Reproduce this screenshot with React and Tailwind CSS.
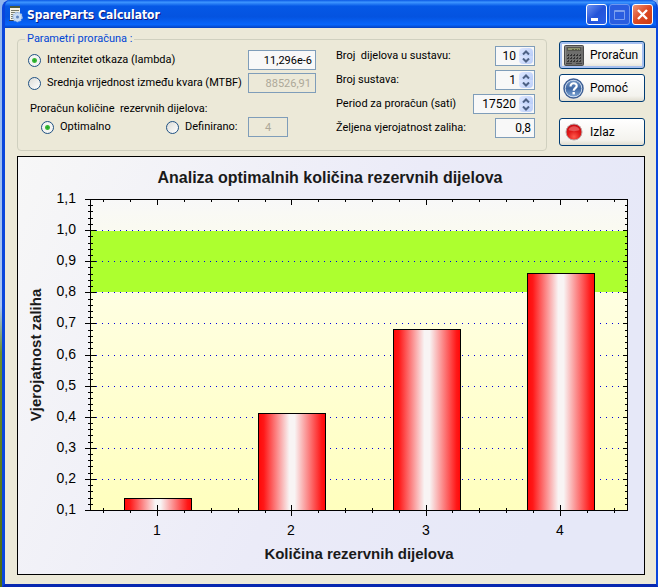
import React from "react";

const VALUES = [
  { label: "1", value: 0.138 },
  { label: "2", value: 0.411 },
  { label: "3", value: 0.681 },
  { label: "4", value: 0.861 },
];

const PLOT = { left: 73, right: 610, top: 43, bottom: 354 };
const STEP_X = (PLOT.right - PLOT.left) / 4;
const yOf = (v) => Math.round(PLOT.bottom - ((v - 0.1) * (PLOT.bottom - PLOT.top)));

function AppIcon() {
  return (
    <svg width="14" height="17" viewBox="0 0 14 17" aria-hidden="true">
      <path d="M1 0h10v14H1z" fill="#f4f2e6" />
      <path d="M1 0h10v2H1z" fill="#4d5a3c" />
      <path d="M2 4.500h8M2 6.500h7M2 8.500h4M2 10.500h3M2 12.500h3" stroke="#77796a" />
      <path d="M0 14.500h8" stroke="#3a4250" />
      <circle cx="8.500" cy="11" r="4.500" fill="#c9dcf3" stroke="#a9c4e8" strokeWidth="1.500" strokeDasharray="2 1" />
      <circle cx="8.500" cy="11" r="1.500" fill="#5f83bd" />
    </svg>
  );
}

function CalculatorIcon() {
  return (
    <svg width="20" height="21" viewBox="0 0 20 21" aria-hidden="true">
      <rect x="0.500" y="0.500" width="19" height="20" rx="1" fill="#6e6e6c" stroke="#4a4a4a" />
      <path d="M1.500 19V1.500h17" fill="none" stroke="#8b8b89" />
      <rect x="3" y="2" width="14" height="4" fill="#55554f" />
      <rect x="4" y="3" width="12" height="2" fill="#8f9470" />
      <path d="M8 4.500h7" stroke="#5a5e40" strokeDasharray="2 1" />
      {[9, 12, 15].map((y) =>
        [3, 6, 9, 12, 15].map((x) => (
          <g key={x + "-" + y}>
            <rect x={x} y={y} width="2" height="2" fill="#333" />
            <rect x={x} y={y} width="1" height="1" fill="#777" />
          </g>
        ))
      )}
      <path d="M2 18.500h6M12 18.500h6" stroke="#444" />
    </svg>
  );
}

function HelpIcon() {
  return (
    <svg width="21" height="21" viewBox="0 0 21 21" aria-hidden="true">
      <defs>
        <linearGradient id="help" x1="0" y1="0" x2="0" y2="1">
          <stop offset="0" stopColor="#7396c4" />
          <stop offset="0.500" stopColor="#3f68a3" />
          <stop offset="1" stopColor="#7ba3d3" />
        </linearGradient>
      </defs>
      <circle cx="10.500" cy="10.500" r="9.500" fill="#e8f0fa" stroke="#3d5f95" strokeWidth="1.500" />
      <circle cx="10.500" cy="10.500" r="8" fill="url(#help)" />
      <path d="M7.500 8.500c0-4.500 6.500-4 6.200-.4-.2 2-3 2.200-3 4.700" fill="none" stroke="#fff" strokeWidth="2.200" />
      <rect x="9.500" y="14" width="2.400" height="2.400" fill="#fff" />
    </svg>
  );
}

function ExitIcon() {
  return (
    <svg width="18" height="18" viewBox="0 0 18 18" aria-hidden="true">
      <defs>
        <radialGradient id="exit" cx="0.500" cy="0.800" r="0.800">
          <stop offset="0" stopColor="#ff5a4c" />
          <stop offset="0.500" stopColor="#e01818" />
          <stop offset="1" stopColor="#c40d14" />
        </radialGradient>
      </defs>
      <circle cx="9" cy="9" r="8" fill="url(#exit)" stroke="#b9a5a5" strokeWidth="1" />
      <path d="M3.500 7c1.500-5 9.500-5 11 0-3 1.500-8 1.500-11 0z" fill="#f28080" opacity="0.600" />
    </svg>
  );
}

function WindowButton({ label, tone, children }) {
  return (
    <button type="button" aria-label={label} className={"flex h-[21px] w-[21px] items-center justify-center rounded-[3px] border " + tone}>
      <svg width="19" height="19" viewBox="0 0 19 19" aria-hidden="true">{children}</svg>
    </button>
  );
}

function Radio({ id, name, label, checked }) {
  return (
    <span className="flex items-center gap-[6px]">
      <input
        id={id}
        type="radio"
        name={name}
        defaultChecked={checked}
        className="h-[13px] w-[13px] shrink-0 appearance-none rounded-full border border-[#1f5183] bg-[linear-gradient(135deg,#dcdcd7,#ffffff)] checked:bg-[radial-gradient(circle,#21a121_0,#3dbb3d_2px,#f4f4f2_3px)]"
      />
      <label htmlFor={id} className="whitespace-nowrap">{label}</label>
    </span>
  );
}

const BOX = "h-5 border border-[#7f9db9] text-right";

function Spinner({ id, value, width }) {
  return (
    <span className={"flex h-5 items-center border border-[#7f9db9] bg-[#f8f8f8] pr-px " + width}>
      <input id={id} type="text" defaultValue={value} className="h-[18px] min-w-0 flex-1 bg-transparent pr-[3px] text-right text-[12px]" />
      <span className="flex flex-col">
        <button type="button" aria-label="+" className="flex h-2 w-[14px] items-center justify-center rounded-t-sm bg-[linear-gradient(135deg,#dfe8ff,#b9cdf8)]">
          <svg width="8" height="5" viewBox="0 0 8 5" aria-hidden="true"><path d="M1 4.500l3-3 3 3" fill="none" stroke="#4d6185" strokeWidth="2" /></svg>
        </button>
        <button type="button" aria-label="−" className="flex h-2 w-[14px] items-center justify-center rounded-b-sm bg-[linear-gradient(135deg,#dfe8ff,#b9cdf8)]">
          <svg width="8" height="5" viewBox="0 0 8 5" aria-hidden="true"><path d="M1 .5l3 3 3-3" fill="none" stroke="#4d6185" strokeWidth="2" /></svg>
        </button>
      </span>
    </span>
  );
}

function Field({ id, label, children }) {
  return (
    <div className="flex h-5 items-center justify-between">
      <label htmlFor={id} className="whitespace-pre">{label}</label>
      {children}
    </div>
  );
}

function ActionButton({ icon, active, children }) {
  return (
    <button
      type="button"
      className={
        "flex h-7 w-full items-center gap-[6px] rounded-[3px] border border-[#003c74] bg-[linear-gradient(#ffffff,#f4f3ee_80%,#e0ddd0)] pl-[3px] text-[12px] " +
        (active ? "shadow-[inset_0_0_0_2px_#a6c0f0]" : "")
      }
    >
      <span className="flex w-[21px] shrink-0 justify-center">{icon}</span>
      <span>{children}</span>
    </button>
  );
}

function Chart() {
  const majors = Array.from({ length: 11 }, (_, i) => i);
  const minors = Array.from({ length: 51 }, (_, i) => i);
  const xMinors = Array.from({ length: 20 }, (_, i) => i);
  return (
    <svg viewBox="0 0 628 419" className="mt-[5px] block w-full font-['Liberation_Sans',Arial,sans-serif]" role="img" aria-label="Analiza optimalnih količina rezervnih dijelova">
      <defs>
        <linearGradient id="back" x1="0" y1="0" x2="1" y2="0.300">
          <stop offset="0" stopColor="#f7f7f7" />
          <stop offset="0.600" stopColor="#ebebf8" />
          <stop offset="1" stopColor="#e6e8f8" />
        </linearGradient>
        <linearGradient id="plot" x1="0" y1="0" x2="0" y2="1">
          <stop offset="0" stopColor="#f8f8f8" />
          <stop offset="0.300" stopColor="#ffffe2" />
          <stop offset="1" stopColor="#ffffbe" />
        </linearGradient>
        <linearGradient id="bar">
          <stop offset="0" stopColor="#ff0808" />
          <stop offset="0.080" stopColor="#ff1818" />
          <stop offset="0.460" stopColor="#f8f4f4" />
          <stop offset="0.540" stopColor="#f8f4f4" />
          <stop offset="0.940" stopColor="#ff1818" />
          <stop offset="1" stopColor="#ff0808" />
        </linearGradient>
      </defs>
      <rect x="0.500" y="0.500" width="627" height="418" fill="url(#back)" stroke="#000" />
      <rect x={PLOT.left} y={PLOT.top} width={PLOT.right - PLOT.left} height={PLOT.bottom - PLOT.top} fill="url(#plot)" />
      <rect x={PLOT.left} y={yOf(1) + 1} width={PLOT.right - PLOT.left} height={yOf(0.8) - yOf(1) - 1} fill="#adff2f" />

      <g stroke="#0000e0" strokeDasharray="1 5">
        {majors.slice(1, 10).map((i) => {
          const y = yOf(0.1 + i / 10) + 0.5;
          return <line key={i} x1={PLOT.left + 6} x2={PLOT.right} y1={y} y2={y} />;
        })}
      </g>
      <g stroke="#000">
        {minors.map((i) => {
          const y = yOf(0.1 + i / 50) + 0.5;
          const major = i % 5 === 0;
          return (
            <g key={i}>
              <line x1={major ? 68 : 71} x2={major ? 79 : 76} y1={y} y2={y} />
              <line x1={major ? 606 : 608} x2="611" y1={y} y2={y} />
            </g>
          );
        })}
        {xMinors.map((i) => {
          const x = Math.round(PLOT.left + STEP_X / 10 + (i * STEP_X) / 5) + 0.5;
          const major = i % 5 === 2;
          return (
            <g key={i}>
              <line x1={x} x2={x} y1={PLOT.top} y2={major ? 49 : 46} />
              <line x1={x} x2={x} y1="352" y2="357" />
            </g>
          );
        })}
      </g>
      {VALUES.map((d, i) => {
        const cx = Math.round(PLOT.left + STEP_X * (i + 0.5));
        const y = yOf(d.value);
        return (
          <g key={d.label}>
            <rect x={cx - 32.5} y={y + 0.5} width="67" height={PLOT.bottom - y} fill="url(#bar)" stroke="#000" />
            <line x1={cx + 0.5} x2={cx + 0.5} y1="349" y2="360" stroke="#000" />
          </g>
        );
      })}
      <rect x={PLOT.left + 0.5} y={PLOT.top + 0.5} width={PLOT.right - PLOT.left} height={PLOT.bottom - PLOT.top} fill="none" stroke="#000" />

      <g className="text-[14px]" textAnchor="end">
        {majors.map((i) => (
          <text key={i} x="59" y={yOf(0.1 + i / 10) + 4}>{(0.1 + i / 10).toFixed(1).replace(".", ",")}</text>
        ))}
      </g>
      <g className="text-[14px]" textAnchor="middle">
        {VALUES.map((d, i) => (
          <text key={d.label} x={Math.round(PLOT.left + STEP_X * (i + 0.5))} y="379">{d.label}</text>
        ))}
      </g>
      <g className="font-bold" fill="#1a1a1a" textAnchor="middle">
        <text x="313" y="27" className="text-[16px]">Analiza optimalnih količina rezervnih dijelova</text>
        <text x="342" y="403" className="text-[15px]">Količina rezervnih dijelova</text>
        <text transform="translate(24 199) rotate(-90)" className="text-[15px]">Vjerojatnost zaliha</text>
      </g>
    </svg>
  );
}

export default function App() {
  return (
    <div className="bg-[linear-gradient(#8fb4ee,#a9c4f2_52%,#6d8f2c_60%,#4c6a12)] pb-px pl-[2px] font-[Roboto,'Liberation_Sans',sans-serif] text-[11px] text-black">
      <main className="rounded-t-lg border-x-[3px] border-b-[3px] border-[#0a46dc] border-b-[#0828b0] border-r-2 bg-[#0a50e0]">
        <header className="flex h-7 items-center rounded-t-md bg-[linear-gradient(#0a58e4,#3d95ff_8%,#0558e6_22%,#0453e0_60%,#0865fa_88%,#0340c0)] pl-1 pr-[3px]">
          <AppIcon />
          <h1 className="ml-1 flex-1 pt-px font-['DejaVu_Sans_Condensed','DejaVu_Sans',sans-serif] text-[12px] font-bold text-white [text-shadow:1px_1px_#0a1883]">
            SpareParts Calculator
          </h1>
          <div className="flex gap-[2px]">
            <WindowButton label="Minimize" tone="border-white bg-[linear-gradient(135deg,#6f93f2,#2353d8_50%,#2a60e8)]">
              <path d="M4 13h7v3H4z" fill="#fff" />
            </WindowButton>
            <WindowButton label="Maximize" tone="border-[#6f97ee] bg-[#2a5de0]">
              <path d="M4.500 5.500h10v9h-10zM4.500 6.500h10" fill="none" stroke="#7b9eee" />
            </WindowButton>
            <WindowButton label="Close" tone="border-white bg-[linear-gradient(135deg,#ee9478,#dc4a24_50%,#cc3c14)]">
              <path d="M5 5l9 9M14 5l-9 9" stroke="#fff" strokeWidth="2.400" />
            </WindowButton>
          </div>
        </header>

        <div className="bg-[#ece9d8] pb-[9px] pl-3 pr-[11px] pt-[5px]">
          <div className="flex items-start gap-3">
            <fieldset className="min-w-0 flex-1 rounded border border-[#d0d0bf] pb-3 pl-[10px] pr-[11px]">
              <legend className="-ml-[3px] px-[2px] leading-3 text-[#0046d5]">Parametri proračuna :</legend>
              <div className="flex justify-between">
                <div className="flex w-[288px] flex-col pt-[5px]">
                  <div className="flex items-center justify-between">
                    <Radio id="lambda" name="source" label="Intenzitet otkaza (lambda)" checked />
                    <input aria-label="Intenzitet otkaza (lambda)" type="text" defaultValue="11,296e-6" className={BOX + " w-[68px] bg-[#f8f8f8] pr-[3px]"} />
                  </div>
                  <div className="mt-[3px] flex items-center justify-between">
                    <Radio id="mtbf" name="source" label="Srednja vrijednost između kvara (MTBF)" />
                    <input aria-label="MTBF" type="text" disabled defaultValue="88526,91" className={BOX + " w-[68px] pr-1 text-[#aca899]"} />
                  </div>
                  <p className="flex h-6 items-end whitespace-pre pl-[2px]">Proračun količine  rezervnih dijelova:</p>
                  <div className="flex items-center">
                    <span className="flex w-[125px] pl-[13px]">
                      <Radio id="optimal" name="mode" label="Optimalno" checked />
                    </span>
                    <span className="flex w-[95px] pl-[13px]">
                      <Radio id="defined" name="mode" label="Definirano:" />
                    </span>
                    <input aria-label="Definirano" type="text" disabled defaultValue="4" className="h-5 w-10 border border-[#7f9db9] text-center text-[#aca899]" />
                  </div>
                </div>
                <div className="flex w-[199px] flex-col gap-1 pt-px">
                  <Field id="parts" label="Broj  dijelova u sustavu:">
                    <Spinner id="parts" value="10" width="w-10" />
                  </Field>
                  <Field id="systems" label="Broj sustava:">
                    <Spinner id="systems" value="1" width="w-10" />
                  </Field>
                  <Field id="period" label="Period za proračun (sati)">
                    <Spinner id="period" value="17520" width="w-[62px]" />
                  </Field>
                  <Field id="probability" label="Željena vjerojatnost zaliha:">
                    <input id="probability" type="text" defaultValue="0,8" className={BOX + " w-10 bg-[#f8f8f8] pr-[3px] text-[12px]"} />
                  </Field>
                </div>
              </div>
            </fieldset>
            <div className="flex w-[86px] flex-col pt-2">
              <ActionButton icon={<CalculatorIcon />} active>Proračun</ActionButton>
              <div className="mt-[5px]"><ActionButton icon={<HelpIcon />}>Pomoć</ActionButton></div>
              <div className="mt-4"><ActionButton icon={<ExitIcon />}>Izlaz</ActionButton></div>
            </div>
          </div>
          <Chart />
        </div>
      </main>
    </div>
  );
}
